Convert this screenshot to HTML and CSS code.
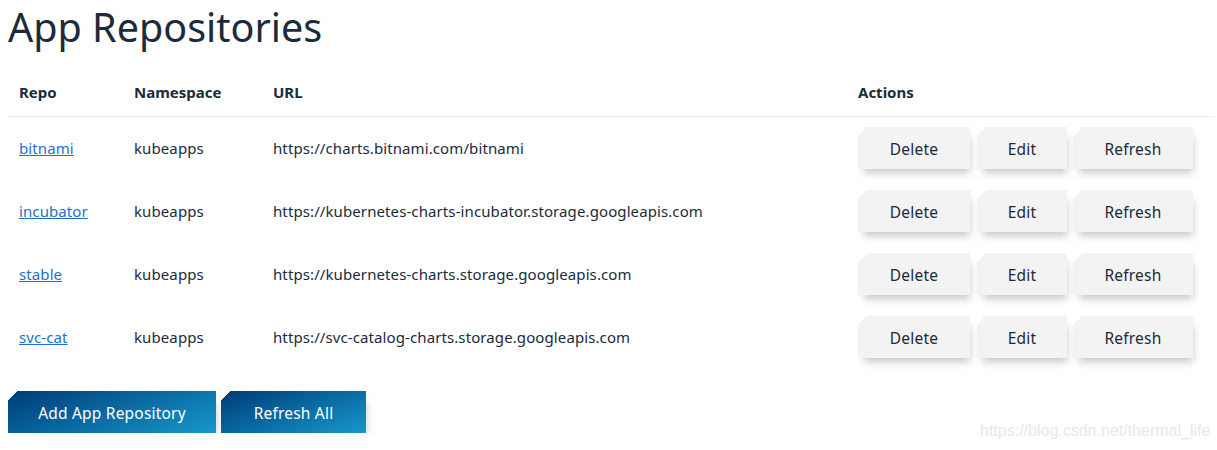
FILE: index.html
```html
<!DOCTYPE html>
<html>
<head>
<meta charset="utf-8">
<link rel="stylesheet" href="styles.css">
</head>
<body>
<main class="page">
  <h1 class="title">App Repositories</h1>
  <table class="repos">
    <colgroup>
      <col class="c-repo"><col class="c-ns"><col class="c-url"><col class="c-act">
    </colgroup>
    <thead>
      <tr><th>Repo</th><th>Namespace</th><th>URL</th><th>Actions</th></tr>
    </thead>
    <tbody>
      <tr>
        <td><a href="#">bitnami</a></td><td>kubeapps</td><td>https://charts.bitnami.com/bitnami</td>
        <td><div class="actions"><button class="btn btn-delete">Delete</button><button class="btn btn-edit">Edit</button><button class="btn btn-refresh">Refresh</button></div></td>
      </tr>
      <tr>
        <td><a href="#">incubator</a></td><td>kubeapps</td><td>https://kubernetes-charts-incubator.storage.googleapis.com</td>
        <td><div class="actions"><button class="btn btn-delete">Delete</button><button class="btn btn-edit">Edit</button><button class="btn btn-refresh">Refresh</button></div></td>
      </tr>
      <tr>
        <td><a href="#">stable</a></td><td>kubeapps</td><td>https://kubernetes-charts.storage.googleapis.com</td>
        <td><div class="actions"><button class="btn btn-delete">Delete</button><button class="btn btn-edit">Edit</button><button class="btn btn-refresh">Refresh</button></div></td>
      </tr>
      <tr>
        <td><a href="#">svc-cat</a></td><td>kubeapps</td><td>https://svc-catalog-charts.storage.googleapis.com</td>
        <td><div class="actions"><button class="btn btn-delete">Delete</button><button class="btn btn-edit">Edit</button><button class="btn btn-refresh">Refresh</button></div></td>
      </tr>
    </tbody>
  </table>
  <div class="footer-actions">
    <button class="btn btn-primary btn-add">Add App Repository</button>
    <button class="btn btn-primary btn-all">Refresh All</button>
  </div>
</main>
<div class="watermark">https://blog.csdn.net/thermal_life</div>
</body>
</html>
```

FILE: styles.css
```css
html, body {
  margin: 0;
  background: #ffffff;
}
body {
  font-family: "Noto Sans", "Open Sans", sans-serif;
  color: #1c2b39;
  font-size: 15px;
}
.page {
  padding: 0 2px 0 8px;
}
.title {
  margin: 0;
  font-size: 39.5px;
  font-weight: 400;
  line-height: 54px;
  height: 67px;
}
.repos {
  width: 1207px;
  border-collapse: collapse;
  table-layout: fixed;
}
.c-repo { width: 115px; }
.c-ns { width: 139px; }
.c-url { width: 585px; }
.c-act { width: 368px; }
.repos th {
  text-align: left;
  font-weight: 700;
  height: 49px;
  padding: 0 11px;
  border-bottom: 1px solid #ececec;
  vertical-align: middle;
}
.repos td {
  padding: 10px 11px 11px;
  height: 42px;
  vertical-align: middle;
  white-space: nowrap;
  letter-spacing: 0.1px;
}
.repos a {
  color: #1d6fd1;
  text-decoration: underline;
}
.actions {
  display: flex;
  gap: 6px;
}
.btn {
  position: relative;
  border: 0;
  height: 42px;
  font-family: "Noto Sans", sans-serif;
  font-size: 15.5px;
  color: #1c2b39;
  background: #f3f3f3;
  box-shadow: 3px 7px 8px -3px rgba(0, 0, 0, 0.22);
  cursor: pointer;
  padding: 2px 0 0;
  letter-spacing: 0.2px;
}
.btn::before {
  content: "";
  position: absolute;
  left: 0;
  top: 0;
  width: 9px;
  height: 9px;
  background: linear-gradient(135deg, #ffffff 50%, transparent 50%);
}
.btn-delete { width: 112px; margin-right: 1px; }
.btn-edit { width: 90px; }
.btn-refresh { width: 120px; }
.footer-actions {
  display: flex;
  gap: 5px;
  margin-top: 22px;
}
.btn-primary {
  color: #ffffff;
  background: linear-gradient(160deg, #003c74 0%, #0a6aa3 50%, #1797ca 100%);
}
.btn-add { width: 208px; }
.btn-all { width: 145px; }
.watermark {
  position: absolute;
  left: 980px;
  top: 422px;
  font-family: "Liberation Sans", Arial, sans-serif;
  font-size: 16px;
  color: #e8e8e8;
}
```
